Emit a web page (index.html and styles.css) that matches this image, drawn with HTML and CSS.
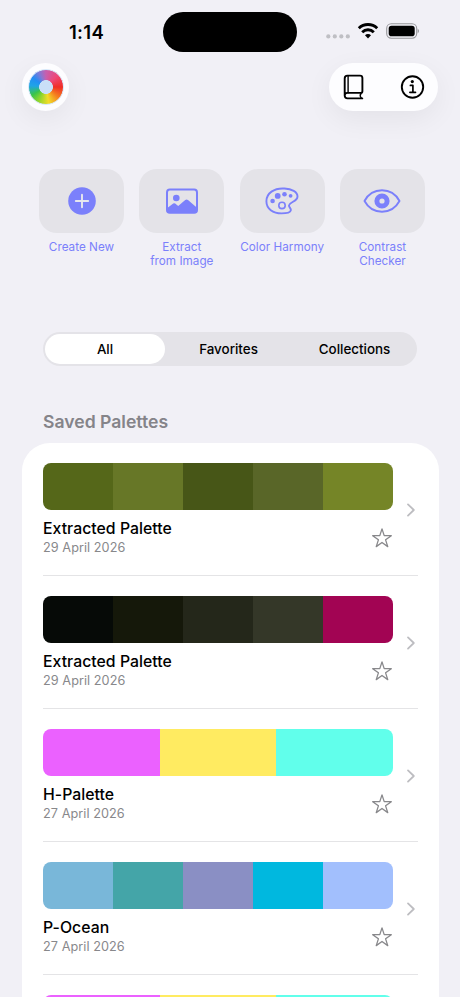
FILE: index.html
```html
<!DOCTYPE html>
<html lang="en">
<head>
<meta charset="utf-8">
<title>Palettes</title>
<link rel="stylesheet" href="styles.css">
</head>
<body>
<svg class="defs" aria-hidden="true">
  <symbol id="star" viewBox="0 0 22 22"><path d="M11 1.9l2.2 6.7 7.1.05-5.7 4.2 2.15 6.75L11 15.5l-5.75 4.1 2.15-6.75-5.7-4.2 7.1-.05z" fill="none" stroke="#88888b" stroke-width="1.3" stroke-linejoin="round"/></symbol>
  <symbol id="chevron" viewBox="0 0 10 14"><path d="M2 1.4l5.8 5.6L2 12.6" fill="none" stroke="#bdbdc1" stroke-width="1.8" stroke-linecap="round" stroke-linejoin="round"/></symbol>
</svg>
<div class="screen">
  <header class="status">
    <span class="time">1:14</span>
    <span class="island"></span>
    <svg class="indicators" viewBox="0 0 94 20" width="94" height="20">
      <g fill="#bfbfc4"><circle cx="3.3" cy="15.4" r="2.1"/><circle cx="9.8" cy="15.4" r="2.1"/><circle cx="16.3" cy="15.4" r="2.1"/><circle cx="22.8" cy="15.4" r="2.1"/></g>
      <g fill="none" stroke="#000" stroke-width="2.9"><path d="M33.8 7.3a13.200 13.200 0 0 1 18.400 0"/><path d="M37.2 11.200a8.200 8.200 0 0 1 11.600 0"/></g>
      <path d="M43 17.400l-3-3.100a4.200 4.200 0 0 1 6 0z"/>
      <rect x="61.7" y="2.800" width="30" height="14.400" rx="4.600" fill="none" stroke="#97979b" stroke-width="1.1"/>
      <rect x="63.700" y="4.800" width="26" height="10.400" rx="2.800"/>
      <path d="M92.700 7.800q1.300.7 1.300 2.200t-1.300 2.200z" fill="#97979b"/>
    </svg>
  </header>
  <nav class="toolbar">
    <button class="wheel-button" aria-label="Color wheel"><span class="wheel"></span></button>
    <div class="actions">
      <svg width="22" height="26" viewBox="0 0 22 26" fill="none" stroke="#000" stroke-width="1.9" stroke-linejoin="round" stroke-linecap="round"><path d="M19.300 24.400H4.500C2.600 24.400 1.700 23.300 1.700 21.600V4.400C1.700 2.500 2.600 1.600 4.400 1.600h12.600c1.600 0 2.400.8 2.400 2.400v13.300c0 1-.5 1.600-1.500 1.600H4.400c-1.700 0-2.700.9-2.700 2.500"/><path d="M5.100 1.800v17" stroke-width="1.400"/><path d="M18.200 19c-1.200 1.500-1.200 3.600.2 5.200" stroke-width="1.400"/></svg>
      <svg width="26" height="26" viewBox="0 0 26 26" fill="none" stroke="#000"><circle cx="13.500" cy="13" r="10.700" stroke-width="1.900"/><circle cx="13.300" cy="7.600" r="1.600" fill="#000" stroke="none"/><path d="M11.400 11.400h2.500v6.600M10.900 18.300h5.600" stroke-width="1.700" stroke-linecap="round" stroke-linejoin="round"/></svg>
    </div>
  </nav>
  <section class="tools">
    <div class="tool"><div class="tile"><svg width="40" height="32" viewBox="0 0 40 32"><circle cx="20" cy="16" r="13.8" fill="#7b80fb"/><path d="M20 9.8v12.4M13.8 16h12.4" stroke="#e7e7ee" stroke-width="1.9" stroke-linecap="round"/></svg></div><span>Create New</span></div>
    <div class="tool"><div class="tile"><svg width="40" height="32" viewBox="0 0 40 32"><rect x="5" y="4.6" width="30" height="23.2" rx="2.8" fill="none" stroke="#7b80fb" stroke-width="2"/><circle cx="14.3" cy="13" r="3.3" fill="#7b80fb"/><path d="M5 23.2l6.200-4.700q1-.7 2 0l3 2.400 7-5.800q1.400-1.100 2.800 0l9 7.600v3q0 2-2 2H7q-2 0-2-2z" fill="#7b80fb"/></svg></div><span>Extract<br>from Image</span></div>
    <div class="tool"><div class="tile"><svg width="40" height="32" viewBox="0 0 40 32"><path d="M22.500 3.500C12 2.800 4.400 8.300 4.400 16.200c0 7.600 6.600 12.200 15.200 12.200 4.700 0 8.600-1 9.200-2.900.7-2-2.100-3-1.800-5.200.4-3.400 8.300-3.500 8.500-8.700.2-4.900-6-7.700-13-8.100z" fill="none" stroke="#7b80fb" stroke-width="1.900"/><g fill="#7b80fb"><circle cx="10.600" cy="16" r="2.300"/><circle cx="15.700" cy="10.900" r="2.900"/><circle cx="22.500" cy="9.300" r="2.300"/><circle cx="28.600" cy="10.800" r="1.900"/></g><circle cx="20" cy="20.400" r="3.200" fill="none" stroke="#7b80fb" stroke-width="1.600"/></svg></div><span>Color Harmony</span></div>
    <div class="tool"><div class="tile"><svg width="40" height="32" viewBox="0 0 40 32"><path d="M2.500 16C6 9.600 12.500 5.300 20 5.300S34 9.600 37.500 16C34 22.400 27.500 26.700 20 26.700S6 22.400 2.500 16z" fill="none" stroke="#7b80fb" stroke-width="1.900" stroke-linejoin="round"/><circle cx="20" cy="16" r="5.100" fill="none" stroke="#7b80fb" stroke-width="5"/></svg></div><span>Contrast<br>Checker</span></div>
  </section>
  <div class="segments"><span class="segment selected">All</span><span class="segment">Favorites</span><span class="segment">Collections</span></div>
  <h2>Saved Palettes</h2>
  <main class="card">
    <article class="row">
      <div class="content"><div class="swatches"><i class="moss"></i><i class="fern"></i><i class="forest"></i><i class="sage"></i><i class="olive"></i></div>
      <div class="info"><div><h3>Extracted Palette</h3><p>29 April 2026</p></div><svg class="star"><use href="#star"/></svg></div></div>
      <svg class="chevron"><use href="#chevron"/></svg>
    </article>
    <article class="row">
      <div class="content"><div class="swatches"><i class="ink"></i><i class="bark"></i><i class="coal"></i><i class="slate"></i><i class="berry"></i></div>
      <div class="info"><div><h3>Extracted Palette</h3><p>29 April 2026</p></div><svg class="star"><use href="#star"/></svg></div></div>
      <svg class="chevron"><use href="#chevron"/></svg>
    </article>
    <article class="row">
      <div class="content"><div class="swatches"><i class="pink"></i><i class="lemon"></i><i class="aqua"></i></div>
      <div class="info"><div><h3>H-Palette</h3><p>27 April 2026</p></div><svg class="star"><use href="#star"/></svg></div></div>
      <svg class="chevron"><use href="#chevron"/></svg>
    </article>
    <article class="row">
      <div class="content"><div class="swatches"><i class="sky"></i><i class="teal"></i><i class="iris"></i><i class="cyan"></i><i class="peri"></i></div>
      <div class="info"><div><h3>P-Ocean</h3><p>27 April 2026</p></div><svg class="star"><use href="#star"/></svg></div></div>
      <svg class="chevron"><use href="#chevron"/></svg>
    </article>
    <article class="row">
      <div class="content"><div class="swatches"><i class="pink"></i><i class="lemon"></i><i class="aqua"></i></div></div>
    </article>
  </main>
</div>
</body>
</html>
```
FILE: styles.css
```css
* { box-sizing: border-box; }
body { margin: 0; background: #f1f0f6; color: #000; font-family: Inter, "Liberation Sans", sans-serif; }
h2, h3, p { margin: 0; }
svg { display: block; flex: none; }
.defs { display: none; }
.screen { height: 997px; overflow: hidden; display: flex; flex-direction: column; }

.status { height: 63px; flex: none; display: grid; grid-template-columns: 163px 134px 1fr; align-items: start; }
.time { padding: 20px 0 0 69px; font-size: 18.5px; line-height: 24px; font-weight: 600; letter-spacing: .3px; }
.island { height: 40px; margin-top: 12px; border-radius: 20px; background: #000; }
.indicators { margin: 21px 0 0 28px; }

.toolbar { height: 48px; flex: none; padding: 0 22px; display: flex; justify-content: space-between; }
.wheel-button, .actions { background: #fdfdff; box-shadow: 0 8px 28px rgba(0, 0, 0, .06); }
.wheel-button { width: 47px; height: 48px; padding: 0; border: 0; border-radius: 24px; display: flex; align-items: center; justify-content: center; }
.wheel { width: 36px; height: 36px; border: 1px solid #d7e9fb; border-radius: 50%; background: radial-gradient(circle, #c9dff8 0 6.6px, transparent 7.2px), conic-gradient(#c75fae, #ee4778 45deg, #f02e26 90deg, #f5801f 130deg, #f2dc28 170deg, #8bd52c 210deg, #38c44c 240deg, #20a4e6 275deg, #238df5 305deg, #8478d5 335deg, #c75fae); }
.actions { width: 109px; border-radius: 24px; padding: 0 13px 0 14px; display: flex; align-items: center; justify-content: space-between; }

.tools { height: 221px; flex: none; padding: 58px 35px 0 39px; display: flex; justify-content: space-between; }
.tool { width: 85px; display: flex; flex-direction: column; align-items: center; font-size: 11.7px; line-height: 14px; letter-spacing: .03px; color: #7b80fb; text-align: center; white-space: nowrap; }
.tile { width: 85px; height: 64px; margin-bottom: 7px; border-radius: 18px; background: #e4e3e8; display: flex; align-items: center; justify-content: center; }

.segments { width: 374px; height: 34px; flex: none; margin-left: 43px; padding: 2px 0 2px 2px; border-radius: 17px; background: #e4e3e8; display: grid; grid-template-columns: 120px 127px 125px; }
.segment { display: flex; align-items: center; justify-content: center; font-size: 13.4px; font-weight: 500; }
.selected { border-radius: 15px; background: #fff; }

h2 { height: 77px; flex: none; padding: 44px 0 0 43px; font-size: 17.6px; line-height: 24px; font-weight: 600; color: #858489; }

.card { flex: none; margin: 0 21px 0 22px; border-radius: 28px; background: #fff; }
.row { position: relative; height: 133px; margin: 0 21px; padding-top: 20px; display: flex; justify-content: space-between; border-bottom: 1px solid #e4e4e6; }
.content { width: 350px; }
.swatches { height: 47px; display: flex; border-radius: 8px; overflow: hidden; }
.swatches i { flex: 1; }
.info { display: flex; justify-content: space-between; padding-top: 8px; }
h3 { font-size: 15.8px; line-height: 21px; font-weight: 500; letter-spacing: .03px; }
p { font-size: 12.7px; line-height: 18px; color: #88888b; letter-spacing: .05px; }
.star { width: 22px; height: 22px; margin: 9px 0 0 0; }
.chevron { width: 10px; height: 14px; margin: 40px 2px 0 0; }

.moss { background: #556719; }
.fern { background: #677727; }
.forest { background: #475617; }
.sage { background: #596628; }
.olive { background: #758527; }
.ink { background: #060a07; }
.bark { background: #15180a; }
.coal { background: #24271a; }
.slate { background: #343728; }
.berry { background: #a20453; }
.pink { background: #eb61ff; }
.lemon { background: #ffeb61; }
.aqua { background: #61ffeb; }
.sky { background: #79b7d9; }
.teal { background: #44a5a8; }
.iris { background: #8a8fc4; }
.cyan { background: #00b8df; }
.peri { background: #a2bffd; }
```
